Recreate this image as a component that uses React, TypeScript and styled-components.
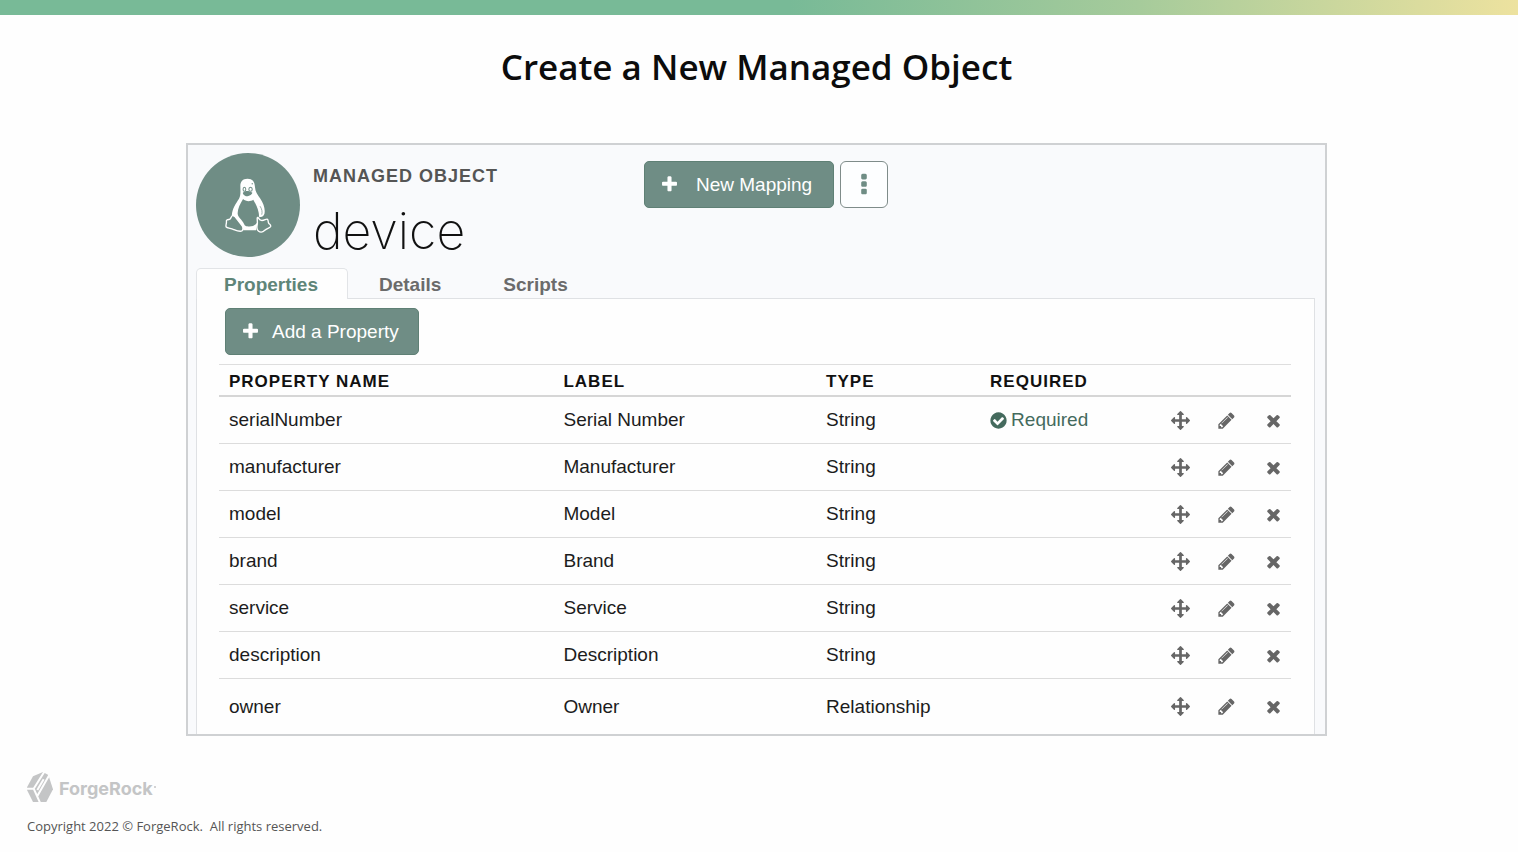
import React from "react";
import styled, { createGlobalStyle } from "styled-components";

const sans = `"Liberation Sans", Arial, sans-serif`;

const GlobalStyle = createGlobalStyle`
  *, *::before, *::after { box-sizing: border-box; }
  body { margin: 0; background: #fefefe; font-family: ${sans}; color: #111; }
  button { font: inherit; cursor: pointer; }
`;

const Page = styled.div`
  min-height: 100vh;
  display: flex;
  flex-direction: column;
`;

const TopBar = styled.div`
  height: 15px;
  background: linear-gradient(90deg, #78ba97 0%, #78ba97 52%, #a6cb9b 75%, #ede29f 100%);
`;

const Main = styled.main`
  flex: 1;
  padding: 24px 191px 0 186px;
`;

const Title = styled.h1`
  margin: 0 0 48px;
  font: 600 35px/56px "Open Sans", sans-serif;
  text-align: center;
  color: #0c0c0c;
`;

const Card = styled.section`
  border: 2px solid #cfd1d3;
  background: #f9fafc;
  padding: 8px 10px 0 8px;
`;

const CardHeader = styled.header`
  display: flex;
  align-items: flex-start;
  height: 115px;
`;

const Avatar = styled.div`
  display: grid;
  place-items: center;
  flex: none;
  width: 104px;
  height: 104px;
  border-radius: 50%;
  background: #6f8d85;
  color: #fff;
`;

const Heading = styled.div`
  flex: none;
  width: 344px;
  padding: 12px 0 0 13px;
`;

const Kicker = styled.div`
  font-size: 18px;
  line-height: 22px;
  font-weight: 700;
  letter-spacing: 1px;
  color: #555;
`;

const Name = styled.h2`
  margin: 12px 0 0;
  font: 200 50px/64px Inter, sans-serif;
  color: #111;
`;

const Actions = styled.div`
  display: flex;
  gap: 6px;
  padding-top: 8px;
`;

const Button = styled.button<{ $gap: number; $width: number }>`
  display: inline-flex;
  align-items: center;
  gap: ${(p) => p.$gap}px;
  width: ${(p) => p.$width}px;
  height: 47px;
  padding: 0 15px;
  border: 1px solid #5f8075;
  border-radius: 5px;
  background: #6f8d85;
  color: #fff;
  font-size: 19px;
  white-space: nowrap;
`;

const MoreButton = styled.button`
  display: grid;
  place-items: center;
  width: 48px;
  height: 47px;
  padding: 0;
  border: 1px solid #7f8c8a;
  border-radius: 6px;
  background: #fdfeff;
  color: #6f8d85;
`;

const Tabs = styled.nav`
  display: flex;
  height: 30px;
`;

const Tab = styled.button<{ $active?: boolean }>`
  position: relative;
  height: 31px;
  padding: 2px ${(p) => (p.$active ? 29 : 30)}px 0 ${(p) => (p.$active ? 27 : 30)}px;
  border: 1px solid ${(p) => (p.$active ? "#e2e4e7" : "transparent")};
  border-bottom: 0;
  border-radius: 5px 5px 0 0;
  background: ${(p) => (p.$active ? "#fefefe" : "transparent")};
  color: ${(p) => (p.$active ? "#5f8578" : "#6b6b6b")};
  font-size: 19px;
  font-weight: 700;
`;

const Panel = styled.div`
  border: 1px solid #dfe1e4;
  border-bottom: 0;
  background: #fefefe;
  padding: 9px 23px 0 22px;
`;

const Toolbar = styled.div`
  display: flex;
  padding: 0 6px 9px;
`;

const Table = styled.table`
  width: 100%;
  table-layout: fixed;
  border-collapse: separate;
  border-spacing: 0;
  border-top: 1px solid #dedede;
`;

const NameCol = styled.col`
  width: 31.2%;
`;

const LabelCol = styled.col`
  width: 24.5%;
`;

const TypeCol = styled.col`
  width: 15.3%;
`;

const ActionCol = styled.col<{ $width: number }>`
  width: ${(p) => p.$width}px;
`;

const Th = styled.th`
  height: 32px;
  padding: 4px 10px 0;
  border-bottom: 2px solid #d6d6d6;
  font-size: 17px;
  line-height: 20px;
  letter-spacing: 1px;
  text-align: left;
  color: #111;
`;

const Row = styled.tr<{ $last: boolean }>`
  height: ${(p) => (p.$last ? 55 : 47)}px;
  td { border-bottom: ${(p) => (p.$last ? 0 : 1)}px solid #dcdcdc; }
`;

const Td = styled.td`
  padding: 0 10px;
  font-size: 19px;
  line-height: 22px;
  color: #1c1c1c;
`;

const IconCell = styled(Td)`
  padding: 0;
`;

const Required = styled.span`
  display: flex;
  align-items: center;
  gap: 3px;
  margin-left: -1px;
  color: #446a5d;
`;

const IconButton = styled.button`
  display: grid;
  place-items: center;
  width: 28px;
  height: 28px;
  margin: 0 auto;
  padding: 0;
  border: 0;
  background: none;
  color: #666;
`;

const Footer = styled.footer`
  padding: 0 27px 16px;
  color: #555;
`;

const Brand = styled.div`
  display: flex;
  align-items: center;
  gap: 6px;
  margin-bottom: 13px;
  color: #c4c5c6;
`;

const BrandName = styled.span`
  padding-top: 5px;
  font: 700 18px/28px Inter, sans-serif;
`;

const BrandDot = styled.span`
  width: 2px;
  height: 2px;
  margin-left: -5px;
  border-radius: 50%;
  background: currentColor;
`;

const Copyright = styled.p`
  margin: 0;
  font: 400 13px/20px "Open Sans", sans-serif;
  white-space: pre;
`;

const paths = {
  plus: "M1600 736v192q0 40-28 68t-68 28h-416v416q0 40-28 68t-68 28h-192q-40 0-68-28t-28-68v-416h-416q-40 0-68-28t-28-68v-192q0-40 28-68t68-28h416v-416q0-40 28-68t68-28h192q40 0 68 28t28 68v416h416q40 0 68 28t28 68z",
  times: "M1490 1322q0 40-28 68l-136 136q-28 28-68 28t-68-28l-294-294-294 294q-28 28-68 28t-68-28l-136-136q-28-28-28-68t28-68l294-294-294-294q-28-28-28-68t28-68l136-136q28-28 68-28t68 28l294 294 294-294q28-28 68-28t68 28l136 136q28 28 28 68t-28 68l-294 294 294 294q28 28 28 68z",
  pencil: "M491 1536l91-91-235-235-91 91v107h128v128h107zm523-928q0-22-22-22-10 0-17 7l-542 542q-7 7-7 17 0 22 22 22 10 0 17-7l542-542q7-7 7-17zm-54-192l416 416-832 832h-416v-416zm683 96q0 53-37 90l-166 166-416-416 166-165q36-38 90-38 53 0 91 38l235 234q37 39 37 91z",
  arrows: "M1792 896q0 26-19 45l-256 256q-19 19-45 19t-45-19-19-45v-128h-384v384h128q26 0 45 19t19 45-19 45l-256 256q-19 19-45 19t-45-19l-256-256q-19-19-19-45t19-45 45-19h128v-384h-384v128q0 26-19 45t-45 19-45-19l-256-256q-19-19-19-45t19-45l256-256q19-19 45-19t45 19 19 45v128h384v-384h-128q-26 0-45-19t-19-45 19-45l256-256q19-19 45-19t45 19l256 256q19 19 19 45t-19 45-45 19h-128v384h384v-128q0-26 19-45t45-19 45 19l256 256q19 19 19 45z",
  check: "M1412 734q0-28-18-46l-91-90q-19-19-45-19t-45 19l-408 407-226-226q-19-19-45-19t-45 19l-91 90q-18 18-18 46 0 27 18 45l362 362q19 19 45 19 27 0 46-19l543-543q18-18 18-45zm252 162q0 209-103 385.5t-279.5 279.5-385.5 103-385.5-103-279.5-279.5-103-385.5 103-385.5 279.5-279.5 385.5-103 385.5 103 279.5 279.5 103 385.5z",
  dots: "M1088 1248v192q0 40-28 68t-68 28h-192q-40 0-68-28t-28-68v-192q0-40 28-68t68-28h192q40 0 68 28t28 68zm0-512v192q0 40-28 68t-68 28h-192q-40 0-68-28t-28-68v-192q0-40 28-68t68-28h192q40 0 68 28t28 68zm0-512v192q0 40-28 68t-68 28h-192q-40 0-68-28t-28-68v-192q0-40 28-68t68-28h192q40 0 68 28t28 68z",
};

function Icon({ name, size = 19 }: { name: keyof typeof paths; size?: number }) {
  return (
    <svg width={size} height={size} viewBox="0 0 1792 1792" fill="currentColor" aria-hidden="true">
      <path d={paths[name]} />
    </svg>
  );
}

function Penguin() {
  const bg = "#6f8d85";
  return (
    <svg width="47" height="55" viewBox="27 25 138 162" fill="none" strokeLinejoin="round" aria-hidden="true">
      <path
        fill="currentColor"
        d="M93 27c-14 0-21 8-21 21 0 15 2 26-4 38-9 14-20 29-21 48 0 9 5 14 11 19l19 17c5 5 3 9 3 9h38l10-40c8 2 13-2 15-9 3-14-3-31-12-44-9-12-15-20-16-35-1-16-7-24-22-24z"
      />
      <path fill={bg} d="M80 87c-8 13-16 28-16 42 0 9 8 15 16 26 4 6 4 11 12 12 11 2 22-1 28-9 7-9 8-20 6-31-3-16-10-27-16-38-8 6-22 6-30-2z" />
      <ellipse cx="84" cy="58" rx="4" ry="6" stroke={bg} strokeWidth="3" />
      <ellipse cx="102" cy="58" rx="5" ry="6" stroke={bg} strokeWidth="3" />
      <path fill={bg} d="M79 69c4-5 8-6 13-6s9 2 15 5c1 5-8 10-14 11-6 0-12-4-14-10z" />
      <path stroke={bg} strokeWidth="2" d="M130 108c6 9 7 17 5 25" />
      <circle cx="107" cy="42" r="2" fill={bg} />
      <path
        fill={bg}
        stroke="currentColor"
        strokeWidth="4"
        d="M49 136c5-1 9 4 13 10l16 21c4 7 1 15-6 15-8 0-14-3-21-6-8-3-19-3-21-7-2-5 2-10 1-16-1-5 3-5 9-6 6-2 4-10 9-11z"
      />
      <path
        fill={bg}
        stroke="currentColor"
        strokeWidth="4"
        d="M123 141c4 2 4 8 11 9 8 1 13-5 17-4 5 2 1 8 5 13 3 3 7 5 5 9-4 5-11 5-17 11-5 5-13 7-19 2-7-5-4-13-3-21 1-8-2-19 1-19z"
      />
    </svg>
  );
}

function BrandMark() {
  return (
    <svg width="26" height="30" viewBox="0 0 78 90" aria-hidden="true">
      <path fill="#c4c5c6" d="M18 13 48 0 64 9 78 52 58 90H18L0 54V46z" />
      <path fill="none" stroke="#fefefe" strokeWidth="6" d="M54-4 20 50H-2M20 50l19 42M70 4 31 72M50 22 31 54" />
    </svg>
  );
}

const rows = [
  { name: "serialNumber", label: "Serial Number", type: "String", required: true },
  { name: "manufacturer", label: "Manufacturer", type: "String" },
  { name: "model", label: "Model", type: "String" },
  { name: "brand", label: "Brand", type: "String" },
  { name: "service", label: "Service", type: "String" },
  { name: "description", label: "Description", type: "String" },
  { name: "owner", label: "Owner", type: "Relationship" },
];

export default function App() {
  return (
    <Page>
      <GlobalStyle />
      <TopBar />
      <Main>
        <Title>Create a New Managed Object</Title>
        <Card>
          <CardHeader>
            <Avatar><Penguin /></Avatar>
            <Heading>
              <Kicker>MANAGED OBJECT</Kicker>
              <Name>device</Name>
            </Heading>
            <Actions>
              <Button $gap={17} $width={190}><Icon name="plus" />New Mapping</Button>
              <MoreButton aria-label="More actions"><Icon name="dots" size={26} /></MoreButton>
            </Actions>
          </CardHeader>
          <Tabs>
            <Tab $active>Properties</Tab>
            <Tab>Details</Tab>
            <Tab>Scripts</Tab>
          </Tabs>
          <Panel>
            <Toolbar>
              <Button $gap={12} $width={194}><Icon name="plus" />Add a Property</Button>
            </Toolbar>
            <Table>
              <colgroup>
                <NameCol />
                <LabelCol />
                <TypeCol />
                <col />
                <ActionCol $width={32} />
                <ActionCol $width={60} />
                <ActionCol $width={34} />
              </colgroup>
              <thead>
                <tr>
                  <Th>PROPERTY NAME</Th>
                  <Th>LABEL</Th>
                  <Th>TYPE</Th>
                  <Th>REQUIRED</Th>
                  <Th colSpan={3} />
                </tr>
              </thead>
              <tbody>
                {rows.map((r, i) => (
                  <Row key={r.name} $last={i === rows.length - 1}>
                    <Td>{r.name}</Td>
                    <Td>{r.label}</Td>
                    <Td>{r.type}</Td>
                    <Td>{r.required && <Required><Icon name="check" />Required</Required>}</Td>
                    <IconCell><IconButton aria-label={`Move ${r.name}`}><Icon name="arrows" /></IconButton></IconCell>
                    <IconCell><IconButton aria-label={`Edit ${r.name}`}><Icon name="pencil" /></IconButton></IconCell>
                    <IconCell><IconButton aria-label={`Remove ${r.name}`}><Icon name="times" /></IconButton></IconCell>
                  </Row>
                ))}
              </tbody>
            </Table>
          </Panel>
        </Card>
      </Main>
      <Footer>
        <Brand>
          <BrandMark />
          <BrandName>ForgeRock</BrandName>
          <BrandDot />
        </Brand>
        <Copyright>Copyright 2022 © ForgeRock.  All rights reserved.</Copyright>
      </Footer>
    </Page>
  );
}
